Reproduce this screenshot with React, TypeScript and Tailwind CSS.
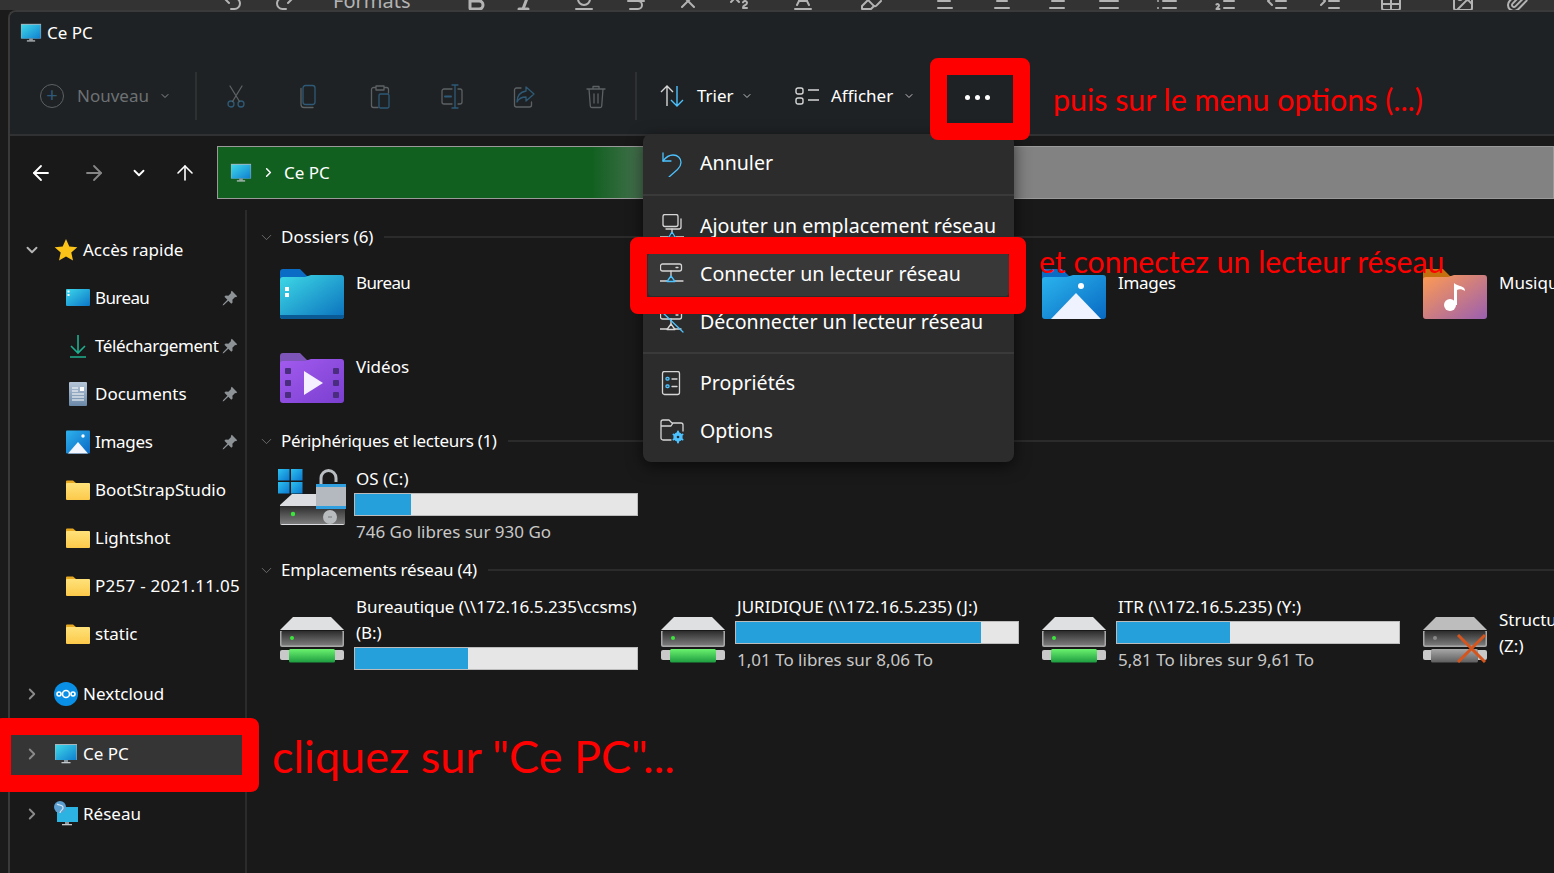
import React from 'react';
import {
  Undo2, Redo2, Bold, Italic, Underline, Strikethrough, X, Subscript, AlignLeft, AlignCenter, AlignRight,
  AlignJustify, List, ListOrdered, Outdent, Indent, Table, Image, Paperclip, Baseline, Highlighter,
  ChevronDown, ChevronRight, ArrowLeft, ArrowRight, ArrowUp,
} from 'lucide-react';

const Monitor = ({ id, className }: { id: string; className?: string }) => (
  <svg viewBox="0 0 24 24" className={className}>
    <defs>
      <linearGradient id={id} x1="0" y1="0" x2="1" y2="1">
        <stop offset="0" stopColor="#3fd8e8" />
        <stop offset="1" stopColor="#0f7fd0" />
      </linearGradient>
    </defs>
    <rect x="1" y="2" width="22" height="16" fill="#a9b4bb" />
    <rect x="1.5" y="3" width="21" height="15" fill={`url(#${id})`} />
    <rect x="10" y="18" width="4" height="2" fill="#8c98a0" />
    <rect x="7.5" y="20" width="9" height="1.3" fill="#c3c9cd" />
  </svg>
);

const SmallFolder = ({ id }: { id: string }) => (
  <svg viewBox="0 0 24 20" className="w-6 h-5">
    <defs>
      <linearGradient id={id} x1="0" y1="0" x2="0" y2="1">
        <stop offset="0" stopColor="#ffe27a" />
        <stop offset="1" stopColor="#fcc94a" />
      </linearGradient>
    </defs>
    <path d="M0 1.5A1 1 0 0 1 1 .5h6l3 2.5v3H0z" fill="#e8a81f" />
    <rect x="0" y="3" width="24" height="17" rx="1" fill={`url(#${id})`} />
  </svg>
);

const Pin = () => (
  <svg viewBox="0 0 16 16" className="w-4 h-4" fill="#8d9296">
    <path d="M9.8.8l5.4 5.4-1.2 1.1-.9-.3-2.7 2.7.2 2.7-1.3 1.3-3-3-4.4 4.4-1.2.3.3-1.2 4.4-4.4-3-3 1.3-1.3 2.7.2 2.7-2.7-.3-.9z" />
  </svg>
);

const BigFolder = ({ id, tab, from, to, children }: { id: string; tab: string; from: string; to: string; children?: React.ReactNode }) => (
  <svg viewBox="0 0 64 50" className="w-16 h-[50px]">
    <defs>
      <linearGradient id={id} x1="0" y1="0" x2="1" y2="1">
        <stop offset="0" stopColor={from} />
        <stop offset="1" stopColor={to} />
      </linearGradient>
    </defs>
    <path d="M0 3a3 3 0 0 1 3-3h17l7 7h34v12H0z" fill={tab} />
    <path d="M0 11a3 3 0 0 1 3-3h22l6-2h30a3 3 0 0 1 3 3v38a3 3 0 0 1-3 3H3a3 3 0 0 1-3-3z" fill={`url(#${id})`} />
    {children}
  </svg>
);

const Drive = ({ id, off }: { id: string; off?: boolean }) => (
  <svg viewBox="0 0 64 46" className="w-16 h-[46px]">
    <defs>
      <linearGradient id={id} x1="0" y1="0" x2="0" y2="1">
        <stop offset="0" stopColor="#2c2c2c" />
        <stop offset="1" stopColor="#7c7c7c" />
      </linearGradient>
      <linearGradient id={`${id}g`} x1="0" y1="0" x2="0" y2="1">
        <stop offset="0" stopColor="#6bf26f" />
        <stop offset="1" stopColor="#1d9c40" />
      </linearGradient>
      <linearGradient id={`${id}s`} x1="0" y1="0" x2="0" y2="1">
        <stop offset="0" stopColor="#a8a8a8" />
        <stop offset="1" stopColor="#5e5e5e" />
      </linearGradient>
    </defs>
    <path d="M13 0h38l13 13H0z" fill={off ? '#bdbdbd' : '#dfe0e2'} />
    <path d="M0 14h64v14a2 2 0 0 1-2 2H2a2 2 0 0 1-2-2z" fill="#a8a8a8" />
    <rect x="1.5" y="14" width="61" height="14.5" rx="1" fill={`url(#${id})`} />
    <circle cx="12" cy="21" r="2" fill={off ? '#8a8a8a' : '#3be63b'} />
    <rect x="0" y="33" width="64" height="10" rx="2" fill="#c9c9c9" />
    {off ? (
      <>
        <rect x="8" y="32" width="47" height="13.5" rx="1.5" fill={`url(#${id}s)`} />
        <path d="M35 18l27 27M62 18L35 45" stroke="#d4551d" strokeWidth="3" />
      </>
    ) : (
      <rect x="9" y="32" width="46" height="13.5" rx="1.5" fill={`url(#${id}g)`} />
    )}
  </svg>
);

const SystemDrive = () => (
  <svg viewBox="0 0 68 56" className="w-[68px] h-14">
    <defs>
      <linearGradient id="osbody" x1="0" y1="0" x2="0" y2="1">
        <stop offset="0" stopColor="#2d2d2d" />
        <stop offset="1" stopColor="#7c7c7c" />
      </linearGradient>
      <linearGradient id="oswin" x1="0" y1="0" x2="1" y2="1">
        <stop offset="0" stopColor="#2cc1f0" />
        <stop offset="1" stopColor="#0b78cf" />
      </linearGradient>
    </defs>
    <path d="M14 25h40l13 11v18a2 2 0 0 1-2 2H4a2 2 0 0 1-2-2V36z" fill="#dcdde0" />
    <rect x="2" y="37" width="65" height="18" fill="url(#osbody)" />
    <circle cx="15" cy="45" r="2.2" fill="#3be63b" />
    <rect x="0" y="0" width="11.5" height="11.5" fill="url(#oswin)" />
    <rect x="13" y="0" width="11.5" height="11.5" fill="url(#oswin)" />
    <rect x="0" y="13" width="11.5" height="11.5" fill="url(#oswin)" />
    <rect x="13" y="13" width="11.5" height="11.5" fill="url(#oswin)" />
    <path d="M43 16V9a7.500 7.500 0 0 1 15 0v4" fill="none" stroke="#b9bec2" strokeWidth="3" />
    <rect x="38" y="15" width="30" height="25" rx="2" fill="#b3b9be" />
    <rect x="38" y="15" width="30" height="3" fill="#2f9fe0" />
    <rect x="38" y="37" width="30" height="3" fill="#2f9fe0" />
    <circle cx="52" cy="48" r="7" fill="#b9bcbf" />
    <rect x="50" y="47.500" width="4" height="1" fill="#777" />
  </svg>
);

const stroke = { fill: 'none', strokeWidth: 1.3, strokeLinecap: 'round' as const, strokeLinejoin: 'round' as const };
const GREY = '#5c6164';
const DIMBLUE = '#2e5a77';
const BLUE = '#4cc2ff';
const LIGHT = '#d6d6d6';

const toolIcons = [
  <g {...stroke} key="cut">
    <circle cx="7" cy="20" r="3" stroke={DIMBLUE} />
    <circle cx="17" cy="20" r="3" stroke={DIMBLUE} />
    <path d="M8.500 17.500L18 2M15.500 17.500L6 2" stroke={GREY} />
  </g>,
  <g {...stroke} key="copy">
    <rect x="7" y="1.500" width="12" height="19" rx="2.500" stroke={DIMBLUE} />
    <path d="M5 4.500v16a3 3 0 0 0 3 3h9" stroke={GREY} />
  </g>,
  <g {...stroke} key="paste">
    <path d="M8 3.500H5.500a2 2 0 0 0-2 2v16a2 2 0 0 0 2 2H10M16 3.500h2.500a2 2 0 0 1 2 2V9M8 2h8v4H8z" stroke={GREY} />
    <rect x="11" y="10" width="10" height="14" rx="1.500" stroke={DIMBLUE} />
  </g>,
  <g {...stroke} key="rename">
    <path d="M12 5H4a2 2 0 0 0-2 2v11a2 2 0 0 0 2 2h8M18 5h2a2 2 0 0 1 2 2v11a2 2 0 0 1-2 2h-2" stroke={GREY} />
    <path d="M15 1v23M12 1h6M12 24h6" stroke={DIMBLUE} />
    <path d="M5 12.500h6" stroke={DIMBLUE} strokeWidth="2" />
  </g>,
  <g {...stroke} key="share">
    <path d="M9 4H4.500a2 2 0 0 0-2 2v15a2 2 0 0 0 2 2h13a2 2 0 0 0 2-2v-3" stroke={GREY} />
    <path d="M14 3l8 7-8 7v-4c-5 0-7.500 2-9 5 0-6 3-10 9-11z" stroke={DIMBLUE} />
  </g>,
  <g {...stroke} key="trash">
    <path d="M3 5h18M9 5V2.500h6V5M5 5l1.300 17a1.500 1.500 0 0 0 1.500 1.500h8.400a1.500 1.500 0 0 0 1.500-1.500L19 5M10 10v9M14 10v9" stroke={GREY} />
  </g>,
];

const menuIcons: Record<string, React.ReactNode> = {
  undo: (
    <g {...stroke}>
      <path d="M3 2v8h8" stroke={BLUE} />
      <path d="M3 10c3-4 6-6 10-6 5 0 8 3.500 8 7.500 0 3-1.500 5-3.500 7L9 26" stroke={BLUE} />
    </g>
  ),
  add: (
    <g {...stroke}>
      <rect x="3" y="0.500" width="15" height="12" rx="2" stroke={LIGHT} />
      <path d="M6 15h13a2 2 0 0 0 2-2V5" stroke={LIGHT} />
      <path d="M12 15v4M0 23h8M16 23h8" stroke={LIGHT} />
      <path d="M12 18l3.500 5.500h-7z" stroke={BLUE} />
    </g>
  ),
  connect: (
    <g {...stroke}>
      <rect x="0.500" y="2" width="21" height="7" rx="2" stroke={LIGHT} />
      <path d="M16 5.500h2M11 9v6M0 19h7M15 19h8" stroke={LIGHT} />
      <path d="M11 14l4 5.500H7z" stroke={BLUE} />
    </g>
  ),
  disconnect: (
    <g {...stroke}>
      <rect x="0.500" y="1" width="21" height="8" rx="2" stroke={LIGHT} />
      <path d="M16 5h2M11 9v6M0 19h7M15 19h6" stroke={LIGHT} />
      <path d="M11 14l4 5.500H7z" stroke={LIGHT} />
      <path d="M1 1l22 21" stroke={BLUE} />
    </g>
  ),
  props: (
    <g {...stroke}>
      <rect x="2.500" y="0.500" width="17" height="23" rx="2" stroke={LIGHT} />
      <rect x="6" y="6.500" width="3" height="2.500" rx="1" stroke={BLUE} />
      <rect x="6" y="14" width="3" height="2.500" rx="1" stroke={BLUE} />
      <path d="M12 8h5M12 15.500h5" stroke={LIGHT} />
    </g>
  ),
  options: (
    <g {...stroke}>
      <path d="M11 21H3a2 2 0 0 1-2-2V3a2 2 0 0 1 2-2h6l3 3h9a2 2 0 0 1 2 2v6M1 7h10l2-3" stroke={LIGHT} />
      <circle cx="18" cy="18" r="4" stroke={BLUE} fill={BLUE} />
      <circle cx="18" cy="18" r="1.300" fill="#2c2c2c" stroke="none" />
      <path d="M18 12.500v2M18 21.500v2M13.500 15.500l1.700 1M20.800 19.500l1.700 1M22.500 15.500l-1.700 1M15.200 19.500l-1.700 1" stroke={BLUE} strokeWidth="2" />
    </g>
  ),
};

const MenuIcon = ({ name }: { name: string }) => (
  <svg viewBox="0 0 24 26" className="w-6 h-[26px] shrink-0">
    {menuIcons[name]}
  </svg>
);

const MenuItem = ({ icon, label, active }: { icon: string; label: string; active?: boolean }) => (
  <div className={`mx-[5px] h-[43px] flex items-center gap-4 pl-3 rounded-sm ${active ? 'bg-[#383838]' : ''}`}>
    <MenuIcon name={icon} />
    <span className="text-[19.6px] text-white whitespace-nowrap -mt-0.5">{label}</span>
  </div>
);

const SectionHeader = ({ label, labelClass }: { label: string; labelClass?: string }) => (
  <div className="h-6 flex items-center">
    <ChevronDown className="w-[17px] h-[17px] text-[#777] ml-[11px]" strokeWidth={1.2} />
    <span className={`ml-[6px] whitespace-nowrap ${labelClass ?? ''}`}>{label}</span>
    <div className="flex-1 h-0.5 bg-[#2b2b2b] ml-[11px]" />
  </div>
);

const Bar = ({ pct }: { pct: number }) => (
  <div className="w-[284px] h-[23px] bg-[#e6e6e6] border border-[#bcbcbc]">
    <div className="h-full bg-[#26a0da]" style={{ width: `${pct}%` }} />
  </div>
);

const Tile = ({ icon, children }: { icon: React.ReactNode; children?: React.ReactNode }) => (
  <div className="flex items-start w-[381px]">
    <div className="w-[74px] shrink-0">{icon}</div>
    <div className="w-[284px] leading-[26px]">{children}</div>
  </div>
);

const FolderName = ({ children, className }: { children: React.ReactNode; className?: string }) => (
  <span className={`ml-[2px] mt-px block ${className ?? ''}`}>{children}</span>
);

const sidebarItems = [
  {
    label: 'Bureau',
    pin: true,
    labelClass: 'tracking-[-0.6px]',
    icon: (
      <svg viewBox="0 0 24 20" className="w-6 h-5">
        <defs>
          <linearGradient id="sbDesk" x1="0" y1="0" x2="1" y2="1">
            <stop offset="0" stopColor="#3bd6ea" />
            <stop offset="1" stopColor="#0c76c8" />
          </linearGradient>
        </defs>
        <rect y="1" width="24" height="17" rx="1" fill="url(#sbDesk)" />
        <rect x="1.500" y="2.500" width="2" height="2" fill="#fff" />
        <rect x="1.500" y="6" width="2" height="2" fill="#fff" />
      </svg>
    ),
  },
  {
    label: 'Téléchargement',
    pin: true,
    labelClass: 'tracking-[-0.4px]',
    icon: (
      <svg viewBox="0 0 24 24" className="w-6 h-6" fill="none" stroke="#1fae8f" strokeWidth="1.600">
        <path d="M12 1v18M5 12l7 7 7-7M4 23h16" />
      </svg>
    ),
  },
  {
    label: 'Documents',
    pin: true,
    icon: (
      <svg viewBox="0 0 24 24" className="w-6 h-6">
        <defs>
          <linearGradient id="sbDoc" x1="0" y1="0" x2="0" y2="1">
            <stop offset="0" stopColor="#b6c6d8" />
            <stop offset="1" stopColor="#6a88a8" />
          </linearGradient>
        </defs>
        <rect x="3" y="0" width="18" height="24" rx="1" fill="url(#sbDoc)" />
        <path d="M6 6h6M6 9h6M6 12h12M6 15h12M6 18h12" stroke="#fff" strokeWidth="1" />
        <rect x="14" y="5" width="4" height="4" fill="#fff" />
      </svg>
    ),
  },
  {
    label: 'Images',
    pin: true,
    labelClass: 'tracking-[-0.3px]',
    icon: (
      <svg viewBox="0 0 24 24" className="w-6 h-6">
        <defs>
          <linearGradient id="sbImg" x1="0" y1="0" x2="1" y2="1">
            <stop offset="0" stopColor="#2eb2ee" />
            <stop offset="1" stopColor="#0a68c4" />
          </linearGradient>
        </defs>
        <rect width="24" height="23" rx="1" y="0.500" fill="url(#sbImg)" />
        <path d="M2 23.500L12 12l10 11.500z" fill="#f3f6ff" />
        <circle cx="17" cy="6" r="1.700" fill="#fff" />
      </svg>
    ),
  },
  { label: 'BootStrapStudio', icon: <SmallFolder id="sf1" /> },
  { label: 'Lightshot', icon: <SmallFolder id="sf2" /> },
  { label: 'P257 - 2021.11.05', labelClass: 'tracking-[0.25px]', icon: <SmallFolder id="sf3" /> },
  { label: 'static', icon: <SmallFolder id="sf4" /> },
];

const RootRow = ({ icon, label, open, active }: { icon: React.ReactNode; label: string; open?: boolean; active?: boolean }) => (
  <div className={`h-12 flex items-center ${active ? 'bg-[#353535]' : ''}`}>
    <div className="w-11 flex justify-center">
      {open ? <ChevronDown className="w-[18px] h-[18px] text-[#b5b5b5]" strokeWidth={2.5} /> : <ChevronRight className="w-[18px] h-[18px] text-[#8a8a8a]" strokeWidth={2.5} />}
    </div>
    <div className="w-6 flex justify-center">{icon}</div>
    <span className="ml-[5px]">{label}</span>
  </div>
);

const topGlyph = 'w-6 h-6 shrink-0 text-[#b3b3b3] translate-y-[3px]';

export default function App() {
  return (
    <div className="relative w-[1554px] h-[873px] overflow-hidden bg-[#1b1b1b] text-[17px] text-white font-['Noto_Sans',sans-serif]">
      {/* bit of the editor behind the window */}
      <div className="h-[10px] bg-[#333333] overflow-hidden flex items-end">
        <Undo2 className={`${topGlyph} ml-[220px]`} />
        <Redo2 className={`${topGlyph} ml-[29px] text-[#5e5e5e]`} />
        <span className="ml-[36px] text-[20px] leading-[24px] translate-y-[3px] text-[#b3b3b3] w-[88px] shrink-0">Formats</span>
        <Bold className={`${topGlyph} ml-[43px]`} strokeWidth={3} />
        <Italic className={`${topGlyph} ml-[26px]`} strokeWidth={3} />
        <Underline className={`${topGlyph} ml-[34px]`} />
        <Strikethrough className={`${topGlyph} ml-[28px]`} />
        <X className={`${topGlyph} ml-[28px]`} />
        <Subscript className={`${topGlyph} ml-[27px]`} />
        <Baseline className={`${topGlyph} ml-[40px]`} />
        <Highlighter className={`${topGlyph} ml-[44px]`} />
        <AlignLeft className={`${topGlyph} ml-[52px]`} />
        <AlignCenter className={`${topGlyph} ml-[31px]`} />
        <AlignRight className={`${topGlyph} ml-[29px]`} />
        <AlignJustify className={`${topGlyph} ml-[30px]`} />
        <List className={`${topGlyph} ml-[34px]`} />
        <ListOrdered className={`${topGlyph} ml-[34px]`} />
        <Outdent className={`${topGlyph} ml-[28px]`} />
        <Indent className={`${topGlyph} ml-[29px]`} />
        <Table className={`${topGlyph} ml-[37px]`} />
        <Image className={`${topGlyph} ml-[48px]`} />
        <Paperclip className={`${topGlyph} ml-[30px]`} />
      </div>

      <div className="ml-2 h-[863px] border-t-2 border-l-2 border-[#3a3a3a] rounded-tl-lg overflow-hidden bg-[#191919] flex flex-col">
        {/* title + command bar */}
        <div className="h-[124px] shrink-0 bg-[#1f2224] border-b-2 border-[#2f3132]">
          <div className="h-[42px] flex items-center pl-[10px]">
            <Monitor id="titlePc" className="w-[22px] h-[22px]" />
            <span className="ml-[5px]">Ce PC</span>
          </div>
          <div className="h-[80px] pt-[4px] flex items-center">
            <div className="ml-[30px] w-6 h-6 rounded-full border-[1.5px] border-[#5c6164] flex items-center justify-center text-[#2e5a77] text-[20px] leading-none">
              <span className="-mt-[2px]">+</span>
            </div>
            <span className="ml-[13px] w-[73px] text-[#6d7174] whitespace-nowrap">Nouveau</span>
            <ChevronDown className="ml-[9px] w-3 h-3 text-[#8a8a8a]" />
            <div className="ml-[24px] w-0.5 h-12 bg-[#2e3032]" />
            <div className="ml-[3px] flex">
              {toolIcons.map((icon, i) => (
                <div key={i} className="w-[72px] flex justify-center">
                  <svg viewBox="0 0 24 25" className="w-6 h-[25px]">
                    {icon}
                  </svg>
                </div>
              ))}
            </div>
            <div className="ml-[3px] w-0.5 h-12 bg-[#2e3032]" />
            <svg viewBox="0 0 25 22" className="ml-[23px] w-[25px] h-[22px]" fill="none" strokeWidth="1.400">
              <path d="M7 21V1M1 7l6-6 6 6" stroke="#d6d6d6" />
              <path d="M17 1v20M11 15l6 6 6-6" stroke={BLUE} />
            </svg>
            <span className="ml-3 w-[36px] whitespace-nowrap">Trier</span>
            <ChevronDown className="ml-[8px] w-3 h-3 text-[#c0c0c0]" />
            <svg viewBox="0 0 24 18" className="ml-[42px] w-6 h-[18px]" fill="none" stroke="#d6d6d6" strokeWidth="1.400">
              <rect x="1" y="1" width="7" height="6" rx="2" />
              <rect x="1" y="11" width="7" height="6" rx="2" />
              <path d="M13 3h11M13 13h11" />
            </svg>
            <span className="ml-3 w-[64px] whitespace-nowrap">Afficher</span>
            <ChevronDown className="ml-[8px] w-3 h-3 text-[#c0c0c0]" />
            <div className="ml-[50px] flex gap-[5px] translate-y-px">
              <div className="w-[5px] h-[5px] rounded-full bg-white" />
              <div className="w-[5px] h-[5px] rounded-full bg-white" />
              <div className="w-[5px] h-[5px] rounded-full bg-white" />
            </div>
          </div>
        </div>

        {/* navigation row */}
        <div className="h-[74px] shrink-0 flex items-start pt-[10px]">
          <div className="h-[53px] flex items-center">
            <ArrowLeft className="ml-[19px] w-6 h-6" strokeWidth={1.8} />
            <ArrowRight className="ml-[29px] w-6 h-6 text-[#868686]" strokeWidth={1.8} />
            <ChevronDown className="ml-[24px] w-[18px] h-[18px]" strokeWidth={2.4} />
            <ArrowUp className="ml-[25px] w-6 h-6" strokeWidth={1.6} />
          </div>
          <div className="ml-[20px] flex-1 h-[53px] border border-[#9a9a9a] flex items-center bg-[linear-gradient(to_right,#116020_0%,#116020_28%,#828282_36%,#828282_100%)]">
            <Monitor id="addrPc" className="ml-3 w-[22px] h-[22px]" />
            <ChevronRight className="ml-[9px] w-[15px] h-[15px]" strokeWidth={2.4} />
            <span className="ml-[8px]">Ce PC</span>
          </div>
        </div>

        <div className="flex-1 flex min-h-0">
          {/* sidebar */}
          <div className="w-[237px] shrink-0 border-r-2 border-[#2b2b2b] pt-4">
            <RootRow
              open
              label="Accès rapide"
              icon={
                <svg viewBox="0 0 24 24" className="w-6 h-6">
                  <path d="M12 1l3.300 7.400 8 .8-6 5.400 1.700 8L12 18.500 5 22.600l1.700-8-6-5.400 8-.8z" fill="#fcc419" />
                </svg>
              }
            />
            {sidebarItems.map((item) => (
              <div key={item.label} className="h-12 flex items-center pl-[56px] pr-[7px]">
                <div className="w-6 flex justify-center">{item.icon}</div>
                <span className={`ml-[5px] whitespace-nowrap ${item.labelClass ?? ''}`}>{item.label}</span>
                {item.pin && (
                  <div className="ml-auto">
                    <Pin />
                  </div>
                )}
              </div>
            ))}
            <div className="mt-3">
              <RootRow
                label="Nextcloud"
                icon={
                  <svg viewBox="0 0 24 24" className="w-6 h-6">
                    <circle cx="12" cy="12" r="12" fill="#0a8fe6" />
                    <g fill="none" stroke="#fff" strokeWidth="1.600">
                      <circle cx="12" cy="12" r="3.500" />
                      <circle cx="5" cy="12" r="2" />
                      <circle cx="19" cy="12" r="2" />
                    </g>
                  </svg>
                }
              />
            </div>
            <div className="mt-3">
              <RootRow active label="Ce PC" icon={<Monitor id="navPc" className="w-6 h-6" />} />
            </div>
            <div className="mt-3">
              <RootRow
                label="Réseau"
                icon={
                  <svg viewBox="0 0 24 26" className="w-6 h-[26px]">
                    <rect x="3" y="6" width="21" height="15" fill="#2db3e2" />
                    <rect x="11" y="21" width="4" height="2" fill="#8c98a0" />
                    <rect x="8" y="23" width="10" height="1.300" fill="#c3c9cd" />
                    <circle cx="6" cy="6" r="6" fill="#5a9fd0" />
                    <path d="M3 3c2 2 5 0 6 3s-3 3-3 6" fill="none" stroke="#cfe6f5" strokeWidth="1.200" />
                  </svg>
                }
              />
            </div>
          </div>

          {/* content */}
          <div className="flex-1 overflow-hidden pt-[15px]">
            <SectionHeader label="Dossiers (6)" />
            <div className="mt-[20px] ml-[33px] w-[1524px] grid grid-cols-4 grid-rows-[84px_76px]">
              <Tile
                icon={
                  <BigFolder id="f1" tab="#0a6cc4" from="#3ed9e6" to="#0a70bd">
                    <rect x="5" y="18" width="4" height="4" fill="#fff" />
                    <rect x="5" y="24" width="4" height="4" fill="#fff" />
                    <path d="M0 46h64v1a3 3 0 0 1-3 3H3a3 3 0 0 1-3-3z" fill="#0a5a96" />
                  </BigFolder>
                }
              >
                <FolderName className="tracking-[-0.6px]">Bureau</FolderName>
              </Tile>
              <Tile icon={<div />} />
              <Tile
                icon={
                  <BigFolder id="f2" tab="#0a6cc4" from="#2bb5ee" to="#0869c2">
                    <circle cx="39" cy="17" r="3" fill="#fff" />
                    <path d="M9 50l25-26 25 26z" fill="#eef3ff" />
                  </BigFolder>
                }
              >
                <FolderName className="tracking-[-0.3px]">Images</FolderName>
              </Tile>
              <Tile
                icon={
                  <BigFolder id="f3" tab="#c4700f" from="#ff9b52" to="#9a5fb0">
                    <circle cx="27" cy="36" r="6" fill="#fff" />
                    <path d="M31 36V14c4 4 11 2 11 8-3-2-6-2-8-1v15z" fill="#fff" />
                  </BigFolder>
                }
              >
                <FolderName>Musique</FolderName>
              </Tile>
              <Tile
                icon={
                  <BigFolder id="f4" tab="#7d55b8" from="#a25bee" to="#7a3fd0">
                    <g fill="#4b2d80">
                      <rect x="5" y="15" width="6" height="6" rx="1" />
                      <rect x="5" y="27" width="6" height="6" rx="1" />
                      <rect x="5" y="39" width="6" height="6" rx="1" />
                      <rect x="53" y="15" width="6" height="6" rx="1" />
                      <rect x="53" y="27" width="6" height="6" rx="1" />
                      <rect x="53" y="39" width="6" height="6" rx="1" />
                    </g>
                    <path d="M24 18l19 12-19 12z" fill="#f5f0ff" />
                  </BigFolder>
                }
              >
                <FolderName>Vidéos</FolderName>
              </Tile>
            </div>

            <SectionHeader label="Périphériques et lecteurs (1)" labelClass="tracking-[-0.3px]" />
            <div className="mt-[13px] ml-[33px] h-[92px]">
              <Tile icon={<div className="-ml-[2px] mt-[3px]"><SystemDrive /></div>}>
                <div className="ml-[2px]">OS (C:)</div>
                <div className="mt-px">
                  <Bar pct={20} />
                </div>
                <div className="ml-[2px] mt-[3px] text-[#c8c8c8]">746 Go libres sur 930 Go</div>
              </Tile>
            </div>

            <SectionHeader label="Emplacements réseau (4)" labelClass="tracking-[-0.2px]" />
            <div className="mt-[12px] ml-[33px] w-[1524px] flex">
              <Tile icon={<div className="mt-[23px]"><Drive id="d1" /></div>}>
                <div className="ml-[2px] whitespace-nowrap tracking-[-0.05px]">Bureautique (\\172.16.5.235\ccsms)<br />(B:)</div>
                <div className="mt-px">
                  <Bar pct={40} />
                </div>
              </Tile>
              <Tile icon={<div className="mt-[23px]"><Drive id="d2" /></div>}>
                <div className="ml-[2px] whitespace-nowrap">JURIDIQUE (\\172.16.5.235) (J:)</div>
                <div className="mt-px">
                  <Bar pct={87} />
                </div>
                <div className="ml-[2px] mt-[3px] text-[#c8c8c8]">1,01 To libres sur 8,06 To</div>
              </Tile>
              <Tile icon={<div className="mt-[23px]"><Drive id="d3" /></div>}>
                <div className="ml-[2px] whitespace-nowrap">ITR (\\172.16.5.235) (Y:)</div>
                <div className="mt-px">
                  <Bar pct={40} />
                </div>
                <div className="ml-[2px] mt-[3px] text-[#c8c8c8]">5,81 To libres sur 9,61 To</div>
              </Tile>
              <Tile icon={<div className="mt-[23px]"><Drive id="d4" off /></div>}>
                <div className="ml-[2px] mt-[13px] whitespace-nowrap">Structure<br />(Z:)</div>
              </Tile>
            </div>
          </div>
        </div>
      </div>

      {/* "..." dropdown */}
      <div className="absolute left-[643px] top-[134px] w-[371px] h-[328px] rounded-lg bg-[#2c2c2c] shadow-[0_4px_16px_rgba(0,0,0,0.6)] pt-[8px]">
        <MenuItem icon="undo" label="Annuler" />
        <div className="h-0.5 bg-[#3a3a3a] mt-[9px] mb-[9px]" />
        <MenuItem icon="add" label="Ajouter un emplacement réseau" />
        <div className="h-[5px]" />
        <MenuItem active icon="connect" label="Connecter un lecteur réseau" />
        <div className="h-[5px]" />
        <MenuItem icon="disconnect" label="Déconnecter un lecteur réseau" />
        <div className="h-0.5 bg-[#3a3a3a] mt-[8px] mb-[8px]" />
        <MenuItem icon="props" label="Propriétés" />
        <div className="h-[5px]" />
        <MenuItem icon="options" label="Options" />
      </div>

      {/* red annotations drawn on top of the screenshot */}
      <div className="absolute left-[930px] top-[58px] w-[100px] h-[82px] border-[17px] border-[#ff0000] rounded-lg" />
      <div className="absolute left-[630px] top-[237px] w-[396px] h-[77px] border-[17px] border-[#ff0000] rounded-lg" />
      <div className="absolute -left-[6px] top-[718px] w-[265px] h-[74px] border-[17px] border-[#ff0000] rounded-lg" />
      <span className="absolute left-[1053px] top-[79px] text-[30.4px] leading-[40px] text-[#ff0000] whitespace-nowrap font-['Lato',sans-serif]">puis sur le menu options (...)</span>
      <span className="absolute left-[1039px] top-[241px] text-[30.2px] leading-[40px] text-[#ff0000] whitespace-nowrap font-['Lato',sans-serif]">et connectez un lecteur réseau</span>
      <span className="absolute left-[272px] top-[729px] text-[45px] leading-[54px] text-[#ff0000] whitespace-nowrap font-['Lato',sans-serif]">cliquez sur "Ce PC"...</span>
    </div>
  );
}
